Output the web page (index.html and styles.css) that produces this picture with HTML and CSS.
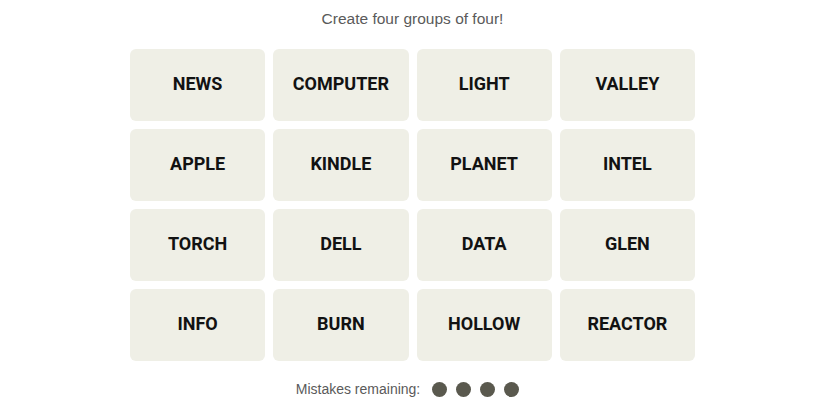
FILE: index.html
```html
<!DOCTYPE html>
<html lang="en">
<head>
  <meta charset="UTF-8">
  <title>Connections</title>
  <link rel="stylesheet" href="styles.css">
</head>
<body>
  <div class="game">
    <p class="subtitle">Create four groups of four!</p>

    <div class="board">
      <button class="tile">NEWS</button>
      <button class="tile">COMPUTER</button>
      <button class="tile">LIGHT</button>
      <button class="tile">VALLEY</button>
      <button class="tile">APPLE</button>
      <button class="tile">KINDLE</button>
      <button class="tile">PLANET</button>
      <button class="tile">INTEL</button>
      <button class="tile">TORCH</button>
      <button class="tile">DELL</button>
      <button class="tile">DATA</button>
      <button class="tile">GLEN</button>
      <button class="tile">INFO</button>
      <button class="tile">BURN</button>
      <button class="tile">HOLLOW</button>
      <button class="tile">REACTOR</button>
    </div>

    <div class="mistakes">
      <span class="mistakes-label">Mistakes remaining:</span>
      <span class="dots">
        <span class="dot"></span>
        <span class="dot"></span>
        <span class="dot"></span>
        <span class="dot"></span>
      </span>
    </div>
  </div>
</body>
</html>
```

FILE: styles.css
```css
body {
  margin: 0;
  background: #fff;
  font-family: "Liberation Sans", Arial, sans-serif;
  color: #121212;
}
.game {
  display: flex;
  flex-direction: column;
  align-items: center;
  padding-top: 9px;
}
.subtitle {
  margin: 0;
  font-size: 15.5px;
  line-height: 20px;
  color: #5a5a5a;
}
.board {
  margin-top: 20px;
  width: 565px;
  display: grid;
  grid-template-columns: repeat(4, 1fr);
  grid-auto-rows: 72px;
  gap: 8px;
}
.tile {
  border: none;
  border-radius: 6px;
  background: #efefe6;
  font-family: Roboto, "Liberation Sans", sans-serif;
  font-weight: 700;
  font-size: 18px;
  color: #121212;
  padding: 0 0 3px;
  cursor: pointer;
}
.mistakes {
  margin-top: 18px;
  display: flex;
  align-items: center;
  gap: 12px;
  height: 20px;
  padding-right: 10px;
  font-size: 14px;
  color: #5a5a5a;
}
.dots {
  display: flex;
  gap: 9px;
}
.dot {
  width: 15px;
  height: 15px;
  border-radius: 50%;
  background: #5a594e;
}
```
